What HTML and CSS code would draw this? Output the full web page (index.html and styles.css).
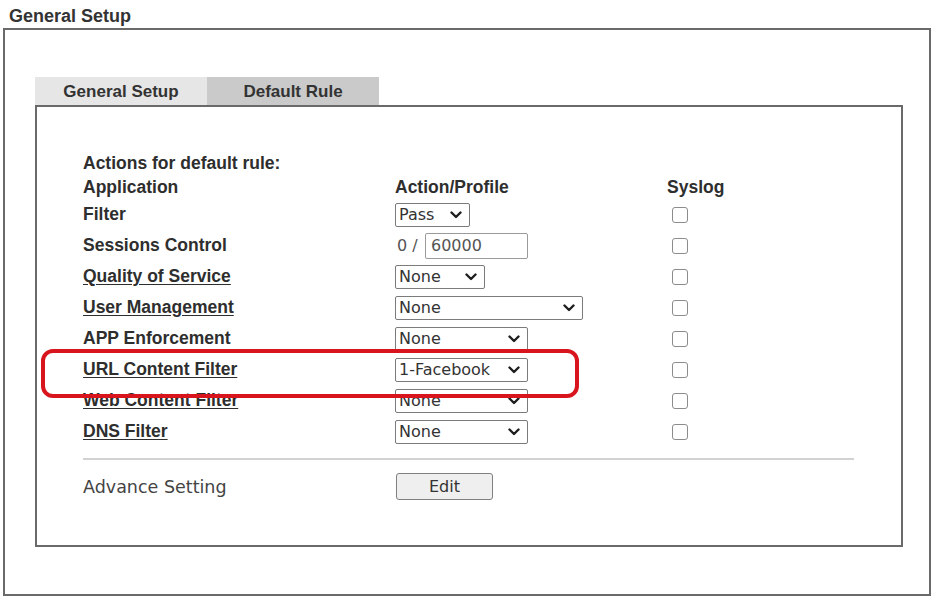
FILE: index.html
```html
<!DOCTYPE html>
<html lang="en">
<head>
  <meta charset="UTF-8">
  <meta name="viewport" content="width=device-width, initial-scale=1.0">
  <link rel="stylesheet" href="styles.css">
  <title>General Setup</title>
</head>
<body>
  <h1 class="page-title">General Setup</h1>

  <div class="panel">
    <div class="tabs">
      <div class="tab">General Setup</div>
      <div class="tab tab-active">Default Rule</div>
    </div>

    <div class="tab-body">
      <table class="rules">
        <colgroup>
          <col class="col-app">
          <col class="col-action">
          <col>
        </colgroup>
        <tr class="row-caption"><td colspan="3">Actions for default rule:</td></tr>
        <tr class="row-head"><td>Application</td><td>Action/Profile</td><td>Syslog</td></tr>
        <tr>
          <td>Filter</td>
          <td>
            <span class="select w-pass">
              <select><option>Pass</option><option>Block</option></select>
              <svg class="chevron" width="12" height="8" viewBox="0 0 12 8"><path d="M1.5 1.5 L6 6 L10.5 1.5"/></svg>
            </span>
          </td>
          <td><input type="checkbox"></td>
        </tr>
        <tr>
          <td>Sessions Control</td>
          <td><span class="sessions">0 /</span><input type="text" class="field" value="60000"></td>
          <td><input type="checkbox"></td>
        </tr>
        <tr>
          <td><a href="#">Quality of Service</a></td>
          <td>
            <span class="select w-qos">
              <select><option>None</option></select>
              <svg class="chevron" width="12" height="8" viewBox="0 0 12 8"><path d="M1.5 1.5 L6 6 L10.5 1.5"/></svg>
            </span>
          </td>
          <td><input type="checkbox"></td>
        </tr>
        <tr>
          <td><a href="#">User Management</a></td>
          <td>
            <span class="select w-user">
              <select><option>None</option></select>
              <svg class="chevron" width="12" height="8" viewBox="0 0 12 8"><path d="M1.5 1.5 L6 6 L10.5 1.5"/></svg>
            </span>
          </td>
          <td><input type="checkbox"></td>
        </tr>
        <tr>
          <td>APP Enforcement</td>
          <td>
            <span class="select w-std">
              <select><option>None</option></select>
              <svg class="chevron" width="12" height="8" viewBox="0 0 12 8"><path d="M1.5 1.5 L6 6 L10.5 1.5"/></svg>
            </span>
          </td>
          <td><input type="checkbox"></td>
        </tr>
        <tr>
          <td><a href="#">URL Content Filter</a></td>
          <td>
            <span class="select w-std">
              <select><option>1-Facebook</option><option>None</option></select>
              <svg class="chevron" width="12" height="8" viewBox="0 0 12 8"><path d="M1.5 1.5 L6 6 L10.5 1.5"/></svg>
            </span>
          </td>
          <td><input type="checkbox"></td>
        </tr>
        <tr>
          <td><a href="#">Web Content Filter</a></td>
          <td>
            <span class="select w-std">
              <select><option>None</option></select>
              <svg class="chevron" width="12" height="8" viewBox="0 0 12 8"><path d="M1.5 1.5 L6 6 L10.5 1.5"/></svg>
            </span>
          </td>
          <td><input type="checkbox"></td>
        </tr>
        <tr>
          <td><a href="#">DNS Filter</a></td>
          <td>
            <span class="select w-std">
              <select><option>None</option></select>
              <svg class="chevron" width="12" height="8" viewBox="0 0 12 8"><path d="M1.5 1.5 L6 6 L10.5 1.5"/></svg>
            </span>
          </td>
          <td><input type="checkbox"></td>
        </tr>
      </table>

      <div class="divider"></div>

      <div class="advance">
        <span class="advance-label">Advance Setting</span>
        <button type="button" class="btn">Edit</button>
      </div>

      <!-- red marker around the URL Content Filter row -->
      <div class="highlight"></div>
    </div>
  </div>
</body>
</html>
```

FILE: styles.css
```css
body {
  margin: 0;
  padding-left: 3px;
  background: #fff;
  color: #2e2e2e;
  font-family: "Liberation Sans", Arial, sans-serif;
}

.page-title {
  margin: 0 0 2px 0;
  padding: 6px 0 0 6px;
  font-size: 18px;
  line-height: 20px;
  font-weight: bold;
  color: #333;
}

.panel {
  width: 928px;
  height: 568px;
  box-sizing: border-box;
  border: 2px solid #6a6a6a;
  padding: 47px 26px 0 30px;
}

.tabs {
  display: flex;
}

.tab {
  width: 172px;
  height: 28px;
  line-height: 29px;
  text-align: center;
  font-size: 17px;
  font-weight: bold;
  color: #333;
  background: #e6e6e6;
}

.tab-active {
  background: #cacaca;
}

.tab-body {
  position: relative;
  width: 868px;
  box-sizing: border-box;
  border: 2px solid #6a6a6a;
  padding: 44px 47px 45px 46px;
}

.rules {
  border-collapse: collapse;
  font-size: 17.5px;
  font-weight: bold;
}

.rules td {
  padding: 0;
  height: 31px;
  vertical-align: middle;
  white-space: nowrap;
}

.rules .row-caption td,
.rules .row-head td {
  height: 24px;
}

.col-app {
  width: 312px;
}

.col-action {
  width: 272px;
}

.rules a {
  color: #2e2e2e;
  text-decoration: underline;
  text-underline-offset: 2px;
}

.select {
  position: relative;
  display: inline-block;
  vertical-align: middle;
}

.select select {
  display: block;
  width: 100%;
  height: 24px;
  box-sizing: border-box;
  appearance: none;
  -webkit-appearance: none;
  border: 1.5px solid #7b7b7b;
  border-radius: 2px;
  background: #fff;
  padding: 0 0 0 3px;
  font-family: "DejaVu Sans", Verdana, sans-serif;
  font-size: 16px;
  color: #333;
}

.chevron {
  position: absolute;
  right: 8px;
  top: 8px;
  pointer-events: none;
}

.chevron path {
  fill: none;
  stroke: #1e1e1e;
  stroke-width: 2.4;
  stroke-linecap: round;
  stroke-linejoin: round;
}

.w-pass { width: 75px; }
.w-qos { width: 90px; }
.w-user { width: 188px; }
.w-std { width: 133px; }

.sessions {
  display: inline-block;
  width: 30px;
  padding-left: 2px;
  box-sizing: border-box;
  font-family: "DejaVu Sans", Verdana, sans-serif;
  font-weight: normal;
  font-size: 16px;
  color: #555;
  vertical-align: middle;
}

.field {
  width: 103px;
  height: 26px;
  box-sizing: border-box;
  border: 1.5px solid #9a9a9a;
  border-radius: 2px;
  padding: 0 0 0 5px;
  font-family: "DejaVu Sans", Verdana, sans-serif;
  font-size: 16px;
  color: #555;
  vertical-align: middle;
}

.rules input[type="checkbox"] {
  appearance: none;
  -webkit-appearance: none;
  width: 16px;
  height: 16px;
  margin: 0 0 0 5px;
  border: 1.5px solid #8c8c8c;
  border-radius: 3px;
  background: #fff;
  vertical-align: middle;
}

.divider {
  width: 771px;
  height: 2px;
  margin-top: 11px;
  background: #d2d2d2;
}

.advance {
  display: flex;
  align-items: center;
  margin-top: 13px;
}

.advance-label {
  width: 313px;
  font-family: "DejaVu Sans", Verdana, sans-serif;
  font-size: 17.5px;
  color: #444;
}

.btn {
  width: 97px;
  height: 27px;
  border: 1px solid #808080;
  border-radius: 3px;
  background: #efefef;
  font-family: "DejaVu Sans", Verdana, sans-serif;
  font-size: 16px;
  color: #333;
  padding: 0;
}

.highlight {
  position: absolute;
  left: 4px;
  top: 242px;
  width: 538px;
  height: 49px;
  box-sizing: border-box;
  border: 4px solid #d8141c;
  border-radius: 12px;
  pointer-events: none;
}
```
